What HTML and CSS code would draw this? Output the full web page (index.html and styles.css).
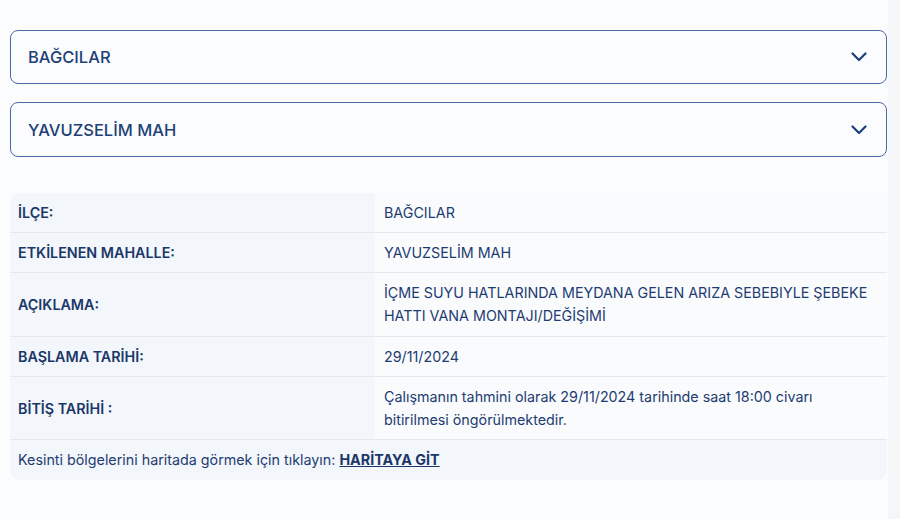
FILE: index.html
```html
<!DOCTYPE html>
<html lang="tr">
<head>
    <meta charset="UTF-8">
    <meta name="viewport" content="width=device-width, initial-scale=1.0">
    <title>Planlı Kesinti Sorgulama</title>
    <link rel="stylesheet" href="styles.css">
</head>
<body>
    <div class="page">
        <div class="select">
            <span>BAĞCILAR</span>
            <svg class="chevron" width="16" height="10" viewBox="0 0 16 10"><path d="M1.5 1.5 L8 8 L14.5 1.5" fill="none" stroke="#1d3f7a" stroke-width="2.2" stroke-linecap="round" stroke-linejoin="round"/></svg>
        </div>
        <div class="select">
            <span>YAVUZSELİM MAH</span>
            <svg class="chevron" width="16" height="10" viewBox="0 0 16 10"><path d="M1.5 1.5 L8 8 L14.5 1.5" fill="none" stroke="#1d3f7a" stroke-width="2.2" stroke-linecap="round" stroke-linejoin="round"/></svg>
        </div>

        <table class="info">
            <tr>
                <th>İLÇE:</th>
                <td>BAĞCILAR</td>
            </tr>
            <tr>
                <th>ETKİLENEN MAHALLE:</th>
                <td>YAVUZSELİM MAH</td>
            </tr>
            <tr class="tall">
                <th>AÇIKLAMA:</th>
                <td>İÇME SUYU HATLARINDA MEYDANA GELEN ARIZA SEBEBIYLE ŞEBEKE HATTI VANA MONTAJI/DEĞİŞİMİ</td>
            </tr>
            <tr>
                <th>BAŞLAMA TARİHİ:</th>
                <td>29/11/2024</td>
            </tr>
            <tr>
                <th>BİTİŞ TARİHİ :</th>
                <td>Çalışmanın tahmini olarak 29/11/2024 tarihinde saat 18:00 civarı bitirilmesi öngörülmektedir.</td>
            </tr>
            <tr class="footer">
                <td colspan="2">Kesinti bölgelerini haritada görmek için tıklayın: <a href="#">HARİTAYA GİT</a></td>
            </tr>
        </table>
    </div>
</body>
</html>
```

FILE: styles.css
```css
body {
    margin: 0;
    background-color: #f5f6f8;
    font-family: Inter, "Noto Sans", sans-serif;
    color: #1e3c72;
}
.page {
    width: 888px;
    min-height: 519px;
    box-sizing: border-box;
    padding: 30px 1px 0 10px;
    background-color: #fbfcfe;
}
.select {
    display: flex;
    align-items: center;
    justify-content: space-between;
    height: 54px;
    box-sizing: border-box;
    margin-bottom: 18px;
    padding: 0 19px 0 17px;
    border: 1px solid #4a6aa3;
    border-radius: 8px;
    font-size: 16.5px;
    font-weight: 500;
    color: #1f3f77;
}
.select + .select {
    height: 55px;
    margin-bottom: 36px;
}
.info {
    width: 100%;
    border-collapse: collapse;
    font-size: 14.3px;
    line-height: 23px;
    border-radius: 10px;
    overflow: hidden;
}
.info th,
.info td {
    text-align: left;
    vertical-align: middle;
    padding: 8px 8px 8px 9px;
    border-bottom: 1px solid #e4e8ee;
}
.info tr.tall th,
.info tr.tall td {
    padding-bottom: 9px;
}
.info th {
    width: 349px;
    padding-left: 8px;
    background-color: #f3f6fb;
    font-weight: 600;
    color: #1b3768;
}
.info td {
    background-color: #f9fbfd;
}
.info tr.footer td {
    border-bottom: none;
    padding: 8px 8px 9px 8px;
    background-color: #f3f6fb;
}
.info a {
    color: #1b3768;
    font-weight: 700;
    text-decoration: underline;
}
```
